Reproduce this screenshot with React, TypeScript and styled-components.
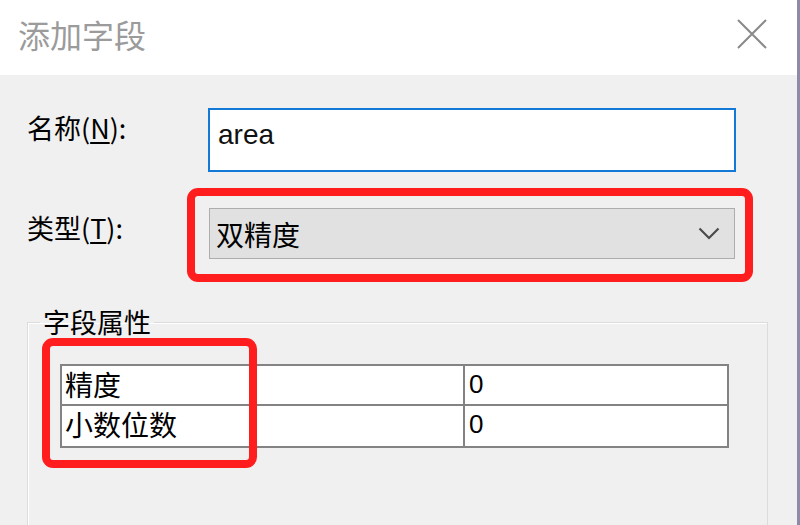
import React from "react";
import styled, { createGlobalStyle } from "styled-components";

const Global = createGlobalStyle`
  html, body { margin: 0; padding: 0; background: #f0f0f0; }
  body { font-family: "Noto Sans CJK SC", "Noto Sans", sans-serif; }
`;

const Window = styled.div`
  width: 800px;
  height: 525px;
  box-sizing: border-box;
  overflow: hidden;
  display: flex;
  flex-direction: column;
  background: #f0f0f0;
  border-right: 3px solid #8e8aa7;
`;

const TitleBar = styled.div`
  height: 75px;
  flex: none;
  background: #ffffff;
  display: flex;
  align-items: center;
  justify-content: space-between;
  padding: 0 30px 0 18px;
`;

const Title = styled.div`
  font-size: 32px;
  line-height: 40px;
  color: #9b9b9b;
  margin-top: -8px;
`;

const CloseIcon = styled.svg`
  width: 30px;
  height: 30px;
  margin-top: -8px;
`;

const Body = styled.div`
  flex: 1;
  padding: 33px 0 0 27px;
  display: flex;
  flex-direction: column;
`;

const FieldRow = styled.div<{ $gap?: number }>`
  display: grid;
  grid-template-columns: 181px auto;
  align-items: start;
  margin-top: ${(p) => p.$gap ?? 0}px;
`;

const Label = styled.div<{ $offset: number }>`
  font-size: 27px;
  line-height: 34px;
  color: #000;
  padding-top: ${(p) => p.$offset}px;
  white-space: nowrap;
  u { text-decoration-thickness: 2px; text-underline-offset: 3px; }
`;

const TextInput = styled.div`
  width: 528px;
  height: 64px;
  box-sizing: border-box;
  border: 2px solid #1279d6;
  background: #fff;
  font-family: "Liberation Sans", Arial, sans-serif;
  font-size: 28px;
  line-height: 34px;
  padding: 8px 8px;
  color: #111;
`;

const SelectWrap = styled.div`
  position: relative;
  width: 526px;
  margin-left: 1px;
`;

const Select = styled.div`
  height: 51px;
  box-sizing: border-box;
  border: 1px solid #adadad;
  background: #e1e1e1;
  display: flex;
  align-items: center;
  justify-content: space-between;
  padding: 0 14px 0 6px;
  font-size: 28px;
  color: #000;
`;

const Chevron = styled.svg`
  width: 22px;
  height: 13px;
`;

const Highlight = styled.div<{ $l: number; $t: number; $w: number; $h: number }>`
  position: absolute;
  left: ${(p) => p.$l}px;
  top: ${(p) => p.$t}px;
  width: ${(p) => p.$w}px;
  height: ${(p) => p.$h}px;
  box-sizing: border-box;
  border: 8px solid #ff1d1d;
  border-radius: 11px;
  pointer-events: none;
`;

const Group = styled.fieldset`
  margin: 48px 0 0 0;
  padding: 0;
  width: 741px;
  min-height: 260px;
  box-sizing: border-box;
  border: 1px solid #dcdcdc;
  box-shadow: inset 1px 1px 0 #ffffff;
`;

const Legend = styled.legend`
  margin-left: 12px;
  padding: 0 3px;
  font-size: 27px;
  line-height: 30px;
  color: #000;
`;

const TableWrap = styled.div`
  position: relative;
  margin: 27px 0 0 32px;
  width: 669px;
`;

const Table = styled.div`
  display: grid;
  grid-template-columns: 401px 1fr;
  border: 2px solid #838383;
  background: #fff;
`;

const Cell = styled.div<{ $num?: boolean; $last?: boolean; $right?: boolean }>`
  height: 40px;
  box-sizing: border-box;
  padding-left: ${(p) => (p.$num ? 4 : 3)}px;
  border-bottom: ${(p) => (p.$last ? "none" : "2px solid #838383")};
  border-left: ${(p) => (p.$right ? "2px solid #838383" : "none")};
  font-family: ${(p) =>
    p.$num ? '"Liberation Sans", Arial, sans-serif' : '"Noto Sans CJK SC", sans-serif'};
  font-size: ${(p) => (p.$num ? 26 : 28)}px;
  line-height: 36px;
  color: #000;
  white-space: nowrap;
`;

export default function App() {
  return (
    <>
      <Global />
      <Window>
        <TitleBar>
          <Title>添加字段</Title>
          <CloseIcon viewBox="0 0 30 30">
            <path d="M1 1 L29 29 M29 1 L1 29" stroke="#8a8a8a" strokeWidth="2" fill="none" />
          </CloseIcon>
        </TitleBar>
        <Body>
          <FieldRow>
            <Label $offset={3}>
              名称(<u>N</u>):
            </Label>
            <TextInput>area</TextInput>
          </FieldRow>
          <FieldRow $gap={36}>
            <Label $offset={3}>
              类型(<u>T</u>):
            </Label>
            <SelectWrap>
              <Select>
                <span>双精度</span>
                <Chevron viewBox="0 0 22 13">
                  <path d="M1.5 1.5 L11 11 L20.5 1.5" stroke="#4a4a4a" strokeWidth="2.2" fill="none" />
                </Chevron>
              </Select>
              <Highlight $l={-22} $t={-20} $w={566} $h={94} />
            </SelectWrap>
          </FieldRow>
          <Group>
            <Legend>字段属性</Legend>
            <TableWrap>
              <Table>
                <Cell>精度</Cell>
                <Cell $num $right>0</Cell>
                <Cell $last>小数位数</Cell>
                <Cell $num $right $last>0</Cell>
              </Table>
              <Highlight $l={-18} $t={-26} $w={215} $h={130} />
            </TableWrap>
          </Group>
        </Body>
      </Window>
    </>
  );
}
